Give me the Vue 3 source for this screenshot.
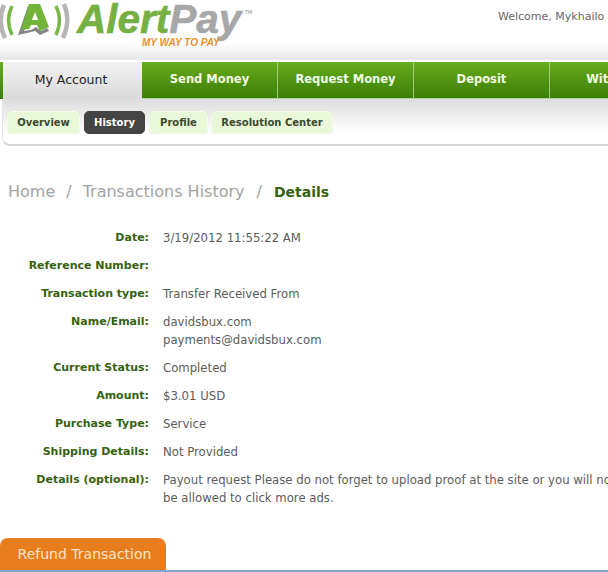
<template>
  <div class="page">
    <header class="top">
      <div class="logo">
        <svg class="logo-mark" width="70" height="42" viewBox="0 0 70 42">
          <path d="M4 5 Q-3 21 5 38" fill="none" stroke="#b5b5b5" stroke-width="4.5" />
          <path d="M12 6 Q5 20 12 35" fill="none" stroke="#79b548" stroke-width="3.5" />
          <path d="M56 6 Q63 20 56 35" fill="none" stroke="#79b548" stroke-width="3.5" />
          <path d="M64 4 Q71 20 63 38" fill="none" stroke="#b5b5b5" stroke-width="4.5" />
          <path d="M18 35 L28 6 L32 8 L24 31 L31 30 L36 27 L41 31 L47 28 L49 31 L40 35 L35 31 L27 33 Z" fill="#858585" />
          <path d="M21 30 L29 4 H40 L49 27 L40 31 L37 25 H31 L29 29 Z" fill="#72b33a" />
          <path d="M32 20 L35 12 L38 20 Z" fill="#fff" />
        </svg>
        <span class="logo-name"><span class="alert">Alert</span><span class="pay">Pay</span></span>
        <span class="logo-tm">TM</span>
        <span class="logo-tag">MY WAY TO PAY</span>
      </div>
      <div class="welcome">Welcome, Mykhailo</div>
    </header>

    <nav class="nav">
      <a v-for="item in navItems" :key="item.label" class="nav-item" :class="{ active: item.active }" :style="{ width: item.width + 'px' }">{{ item.label }}</a>
    </nav>

    <div class="subnav">
      <a v-for="item in subItems" :key="item.label" class="pill" :class="{ active: item.active }" :style="{ width: item.width + 'px' }">{{ item.label }}</a>
    </div>

    <div class="crumbs">
      <span>Home</span><span class="sep">/</span><span>Transactions History</span><span class="sep">/</span><b>Details</b>
    </div>

    <dl class="details">
      <template v-for="row in rows" :key="row.label">
        <dt>{{ row.label }}:</dt>
        <dd><div v-for="line in row.lines" :key="line">{{ line }}</div></dd>
      </template>
    </dl>

    <div class="actions">
      <button class="refund" type="button">Refund Transaction</button>
    </div>
  </div>
</template>

<script setup>
const navItems = [
  { label: 'My Account', width: 139, active: true },
  { label: 'Send Money', width: 136 },
  { label: 'Request Money', width: 136 },
  { label: 'Deposit', width: 136 },
  { label: 'Withdraw', width: 136 }
]

const subItems = [
  { label: 'Overview', width: 73 },
  { label: 'History', width: 61, active: true },
  { label: 'Profile', width: 59 },
  { label: 'Resolution Center', width: 122 }
]

const rows = [
  { label: 'Date', lines: ['3/19/2012 11:55:22 AM'] },
  { label: 'Reference Number', lines: [] },
  { label: 'Transaction type', lines: ['Transfer Received From'] },
  { label: 'Name/Email', lines: ['davidsbux.com', 'payments@davidsbux.com'] },
  { label: 'Current Status', lines: ['Completed'] },
  { label: 'Amount', lines: ['$3.01 USD'] },
  { label: 'Purchase Type', lines: ['Service'] },
  { label: 'Shipping Details', lines: ['Not Provided'] },
  { label: 'Details (optional)', lines: ['Payout request Please do not forget to upload proof at the site or you will not', 'be allowed to click more ads.'] }
]
</script>

<style>
html, body {
  margin: 0;
  background: #fff;
  overflow: hidden;
}
</style>

<style scoped>
.page {
  width: 608px;
  height: 572px;
  overflow: hidden;
  font-family: "DejaVu Sans", Verdana, sans-serif;
  color: #444;
}

.top {
  height: 60px;
  display: flex;
  justify-content: space-between;
  background: linear-gradient(#fff 0, #fff 42px, #e6e6e6 60px);
}

.logo {
  position: relative;
  width: 260px;
  height: 50px;
}
.logo-mark {
  position: absolute;
  left: 0;
  top: 0;
}
.logo-name {
  position: absolute;
  left: 77px;
  top: -4px;
  font-family: "Liberation Sans", Arial, sans-serif;
  font-size: 40.5px;
  font-weight: 700;
  font-style: italic;
  -webkit-text-stroke: 0.6px currentColor;
  white-space: nowrap;
}
.alert { color: #76b043; }
.pay { color: #a7a7a7; }
.logo-tm {
  position: absolute;
  left: 245px;
  top: 9px;
  font-size: 5px;
  color: #888;
}
.logo-tag {
  position: absolute;
  left: 142px;
  top: 37px;
  font-family: "Liberation Sans", Arial, sans-serif;
  font-size: 10px;
  font-weight: 700;
  font-style: italic;
  color: #e8912d;
  white-space: nowrap;
}

.welcome {
  margin-top: 10px;
  font-size: 11px;
  line-height: 14px;
  color: #666;
  white-space: nowrap;
  width: 110px;
}

.nav {
  display: flex;
  height: 37px;
  padding-left: 3px;
  margin-top: 2px;
  box-sizing: border-box;
  width: 720px;
  background: linear-gradient(#68ad1c, #3c7d07) 0 0 / 3px 100% no-repeat;
}
.nav-item {
  flex: none;
  box-sizing: border-box;
  display: flex;
  align-items: center;
  justify-content: center;
  padding-bottom: 2px;
  font-size: 11.5px;
  font-weight: 700;
  color: #f2fbe6;
  background: linear-gradient(#68ad1c, #3c7d07);
  border-right: 1px solid #a4cc7c;
  border-bottom: 1px solid #b5d69b;
}
.nav-item.active {
  padding-right: 3px;
  font-size: 12.5px;
  font-weight: 400;
  color: #222;
  background: linear-gradient(#f2f2f2, #dadada);
  border: 0;
}

.subnav {
  height: 47px;
  box-sizing: border-box;
  padding: 12px 0 0 4px;
  margin-left: 2px;
  display: flex;
  gap: 4px;
  align-items: flex-start;
  background: linear-gradient(#dcdcdc, #fff 32px);
  border-bottom: 2px solid #d4d4d4;
  border-left: 1px solid #e6e6e6;
  border-bottom-left-radius: 8px;
}
.pill {
  flex: none;
  height: 23px;
  box-sizing: border-box;
  display: flex;
  align-items: center;
  justify-content: center;
  font-size: 10px;
  font-weight: 700;
  color: #3a4a30;
  background: #e9f8d8;
  border: 1px solid #f4fbea;
  border-radius: 5px;
  box-shadow: 0 0 1px #c8d8b8;
}
.pill:nth-child(3) {
  margin-right: -1px;
}
.pill.active {
  color: #fff;
  background: #444;
  border-color: #444;
}

.crumbs {
  margin: 35px 0 0 8px;
  height: 22px;
  line-height: 22px;
  font-size: 16px;
  color: #a3a3a3;
  white-space: nowrap;
}
.crumbs .sep {
  margin: 0 11px;
}
.crumbs .sep:nth-of-type(4) {
  margin: 0 12px;
}
.crumbs b {
  color: #35620f;
  font-weight: 700;
  font-size: 14px;
}

.details {
  margin: 26px 0 0;
  display: grid;
  grid-template-columns: 149px 445px;
  column-gap: 14px;
  row-gap: 10px;
  font-size: 11.7px;
  line-height: 18px;
}
.details dt {
  margin: 0;
  min-height: 18px;
  font-size: 11px;
  text-align: right;
  font-weight: 700;
  color: #35620f;
  white-space: nowrap;
}
.details dd {
  margin: 0;
  min-height: 18px;
  color: #5c5c5c;
  white-space: nowrap;
}

.actions {
  margin-top: 31px;
  display: flex;
  border-bottom: 2px solid #7fa6c9;
}
.refund {
  width: 166px;
  height: 32px;
  padding: 0 0 0 3px;
  border: 0;
  border-radius: 8px 8px 0 0;
  background: #e87d1e;
  color: #fbe3c8;
  font-family: "DejaVu Sans", Verdana, sans-serif;
  font-size: 14px;
}
</style>
